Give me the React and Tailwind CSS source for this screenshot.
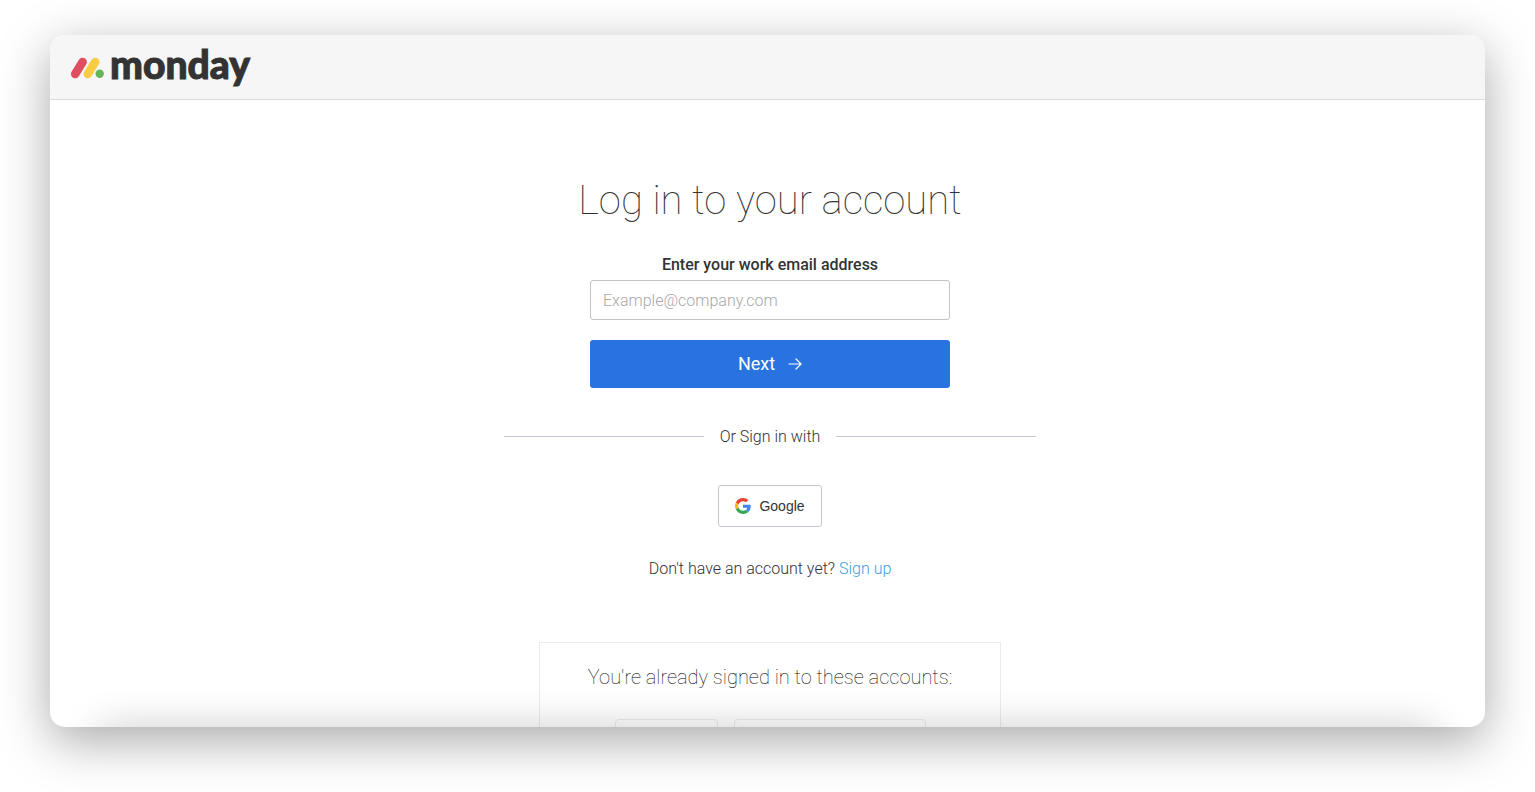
import React from "react";

function MondayLogo() {
  return (
    <a href="#" className="flex items-center text-[#333333]">
      <svg width="34" height="22" viewBox="0 0 34 22" aria-hidden="true" className="mt-[2px]">
        <path d="M5.2 17 L12.6 5" stroke="#df4f5f" strokeWidth="8.6" strokeLinecap="round" />
        <path d="M17.8 17 L25.2 5" stroke="#f9cc45" strokeWidth="8.6" strokeLinecap="round" />
        <circle cx="29.7" cy="16.7" r="4.2" fill="#64b555" />
      </svg>
      <span className="ml-[6px] pb-[6px] font-['Lato',sans-serif] text-[39px] leading-[48px] font-black [-webkit-text-stroke:1px_#333333]">
        monday
      </span>
    </a>
  );
}

function GoogleIcon() {
  return (
    <svg width="16" height="16" viewBox="0 0 48 48" aria-hidden="true">
      <path fill="#EA4335" d="M24 9.5c3.54 0 6.71 1.22 9.21 3.6l6.85-6.85C35.9 2.38 30.47 0 24 0 14.62 0 6.51 5.38 2.56 13.22l7.98 6.19C12.43 13.72 17.74 9.5 24 9.5z" />
      <path fill="#4285F4" d="M46.98 24.55c0-1.57-.15-3.09-.38-4.55H24v9.02h12.94c-.58 2.96-2.26 5.48-4.78 7.18l7.73 6c4.51-4.18 7.09-10.36 7.09-17.65z" />
      <path fill="#FBBC05" d="M10.53 28.59c-.48-1.45-.76-2.99-.76-4.59s.27-3.14.76-4.59l-7.98-6.19C.92 16.46 0 20.12 0 24c0 3.88.92 7.54 2.56 10.78l7.97-6.19z" />
      <path fill="#34A853" d="M24 48c6.48 0 11.93-2.13 15.89-5.81l-7.73-6c-2.15 1.45-4.92 2.3-8.16 2.3-6.26 0-11.57-4.22-13.47-9.91l-7.98 6.19C6.51 42.62 14.62 48 24 48z" />
    </svg>
  );
}

function ArrowRight() {
  return (
    <svg width="14" height="14" viewBox="0 0 14 14" fill="none" stroke="currentColor" strokeWidth="1.2" strokeLinecap="round" strokeLinejoin="round" aria-hidden="true">
      <path d="M1 7H13M8 2L13 7L8 12" />
    </svg>
  );
}

export default function App() {
  return (
    <div className="flex h-screen flex-col bg-white px-[50px] pt-[35px] pb-[65px] font-['Roboto',sans-serif] text-[#333333]">
      <div className="relative flex min-h-0 flex-1 flex-col overflow-hidden rounded-[15px] bg-white shadow-[0_14px_50px_rgba(0,0,0,0.34)]">
        <header className="flex h-[65px] shrink-0 items-center border-b border-[#dddddd] bg-[#f6f6f6] px-5">
          <MondayLogo />
        </header>

        <main className="flex flex-col items-center pt-[73px] pl-[5px]">
          <h1 className="text-[40px] leading-[56px] font-thin">Log in to your account</h1>

          <form className="mt-6 flex w-full max-w-[360px] flex-col" onSubmit={(e) => e.preventDefault()}>
            <label htmlFor="email" className="text-center text-base leading-6 font-medium">
              Enter your work email address
            </label>
            <input
              id="email"
              type="email"
              placeholder="Example@company.com"
              className="mt-[3px] h-10 rounded-[3px] border border-[#c4c4c4] px-3 text-base font-light outline-none placeholder:text-[#a8a8a8]"
            />
            <button type="submit" className="mt-5 flex h-12 items-center justify-center gap-[13px] rounded-[3px] bg-[#2973e1] text-lg text-white">
              Next
              <ArrowRight />
            </button>
          </form>

          <div className="mt-9 flex items-center gap-4 text-base leading-[25px] font-light">
            <span className="h-px w-[200px] bg-[#c3c6d4]" />
            <h2>Or Sign in with</h2>
            <span className="h-px w-[200px] bg-[#c3c6d4]" />
          </div>

          <button type="button" className="mt-9 flex h-[42px] items-center gap-2 rounded-[3px] border border-[#c3c6d4] px-4 font-['Liberation_Sans',sans-serif] text-sm">
            <GoogleIcon />
            Google
          </button>

          <p className="mt-[30px] text-base leading-6 font-light">
            Don't have an account yet?{" "}
            <a href="#" className="text-[#419fe2]">Sign up</a>
          </p>

          <section className="mt-[61px] flex w-[462px] flex-col items-center border border-[#ececec] pt-5">
            <h2 className="text-xl leading-7 font-thin text-black">You're already signed in to these accounts:</h2>
            <div className="mt-7 flex gap-4">
              <a href="#" aria-label="First account" className="h-12 w-[103px] rounded border border-[#ececec]" />
              <a href="#" aria-label="Second account" className="h-12 w-[192px] rounded border border-[#ececec]" />
            </div>
          </section>
        </main>

        <div className="pointer-events-none absolute top-full right-[50px] left-[50px] h-10 shadow-[0_0_40px_rgba(0,0,0,0.2)]" />
      </div>
    </div>
  );
}
